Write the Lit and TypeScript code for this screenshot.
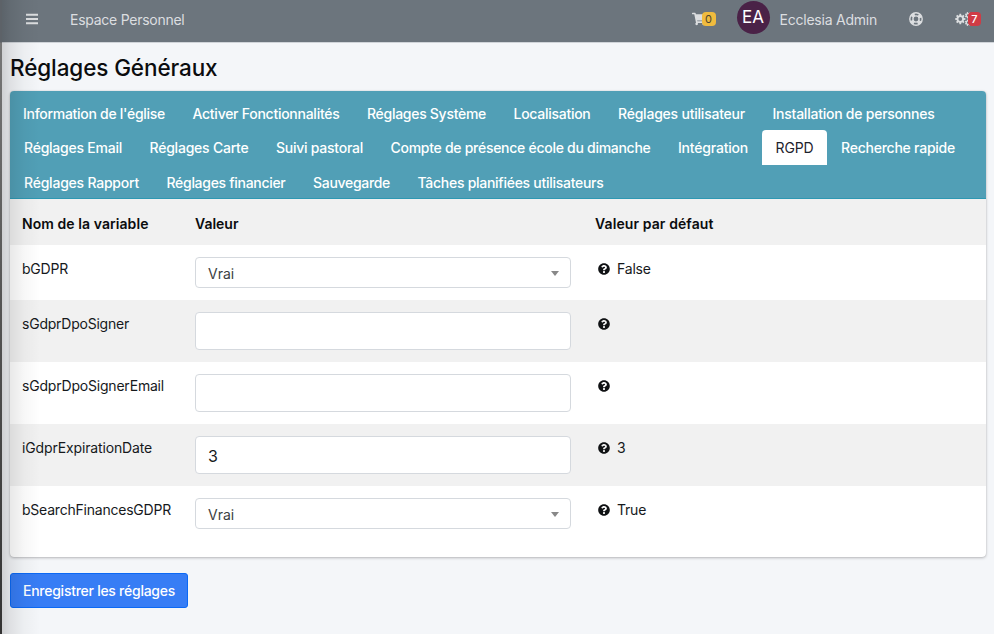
import { LitElement, html, css, svg } from "lit";
import { customElement } from "lit/decorators.js";

const gear = (cx: number, cy: number, r: number, hole: number, teeth: number) => {
  const pts: string[] = [];
  for (let i = 0; i < teeth; i++) {
    const a = (i / teeth) * Math.PI * 2;
    const s = (Math.PI * 2) / teeth;
    for (const [o, k] of [[-0.36, 0.74], [-0.2, 1], [0.2, 1], [0.36, 0.74]]) {
      pts.push(`${(cx + Math.cos(a + o * s) * r * k).toFixed(2)} ${(cy + Math.sin(a + o * s) * r * k).toFixed(2)}`);
    }
  }
  return `M${pts.join("L")}ZM${cx - hole} ${cy}a${hole} ${hole} 0 1 0 ${hole * 2} 0a${hole} ${hole} 0 1 0 ${-hole * 2} 0Z`;
};

const question = html`<svg class="help" viewBox="0 0 512 512">${svg`<path fill="currentColor" d="M504 256c0 136.997-111.043 248-248 248S8 392.997 8 256C8 119.083 119.043 8 256 8s248 111.083 248 248zM262.655 90c-54.497 0-89.255 22.957-116.549 63.758-3.536 5.286-2.353 12.415 2.715 16.258l34.699 26.31c5.205 3.947 12.621 3.008 16.665-2.122 17.864-22.658 30.113-35.797 57.303-35.797 20.429 0 45.698 13.148 45.698 32.958 0 14.976-12.363 22.667-32.534 33.976C247.128 238.528 216 254.941 216 296v4c0 6.627 5.373 12 12 12h56c6.627 0 12-5.373 12-12v-1.333c0-28.462 83.186-29.647 83.186-106.667 0-58.002-60.165-102-116.531-102zM256 338c-25.365 0-46 20.635-46 46 0 25.364 20.635 46 46 46s46-20.636 46-46c0-25.365-20.635-46-46-46z"/>`}</svg>`;

interface Tab { label: string; width: number; active?: boolean }
const tabRows: Tab[][] = [
  [
    { label: "Information de l'église", width: 142 },
    { label: "Activer Fonctionnalités", width: 147 },
    { label: "Réglages Système", width: 119 },
    { label: "Localisation", width: 77 },
    { label: "Réglages utilisateur", width: 127 },
    { label: "Installation de personnes", width: 162 },
  ],
  [
    { label: "Réglages Email", width: 98 },
    { label: "Réglages Carte", width: 99 },
    { label: "Suivi pastoral", width: 87 },
    { label: "Compte de présence école du dimanche", width: 260 },
    { label: "Intégration", width: 70 },
    { label: "RGPD", width: 38, active: true },
    { label: "Recherche rapide", width: 114 },
  ],
  [
    { label: "Réglages Rapport", width: 115 },
    { label: "Réglages financier", width: 119 },
    { label: "Sauvegarde", width: 77 },
    { label: "Tâches planifiées utilisateurs", width: 186 },
  ],
];

interface Row { name: string; nameWidth: number; kind: "select" | "text"; value: string; def: string }
const rows: Row[] = [
  { name: "bGDPR", nameWidth: 46, kind: "select", value: "Vrai", def: "False" },
  { name: "sGdprDpoSigner", nameWidth: 107, kind: "text", value: "", def: "" },
  { name: "sGdprDpoSignerEmail", nameWidth: 142, kind: "text", value: "", def: "" },
  { name: "iGdprExpirationDate", nameWidth: 130, kind: "text", value: "3", def: "3" },
  { name: "bSearchFinancesGDPR", nameWidth: 149, kind: "select", value: "Vrai", def: "True" },
];

@customElement("app-root")
export class AppRoot extends LitElement {
  static styles = css`
    :host { display: block; position: relative; height: 634px; overflow: hidden; background: #f4f6f9; color: #16191c;
      font: 14px/21px Inter, "Liberation Sans", sans-serif; }
    * { box-sizing: border-box; }
    svg { display: block; flex: none; }
    .bar { display: flex; align-items: center; height: 43px; padding: 0 12px 4px 26px; background: #6c757d;
      border-bottom: 1px solid #d0d4d9; color: #dcdee0; white-space: nowrap; }
    .brand { margin-left: 32px; flex: 1; }
    .badged { position: relative; height: 16px; }
    .badge { position: absolute; top: 1px; height: 14px; line-height: 14px; border-radius: 4px; font-size: 11px; text-align: center; }
    .yellow { left: 10px; width: 14px; background: #f0bb3e; color: #4c432c; }
    .red { left: 13px; width: 13px; background: #d03b45; color: #fff; font-weight: 500; }
    .avatar { width: 33px; height: 33px; margin: 0 10px 3px 31px; border-radius: 50%; background: #4a2247; color: #fff;
      font-size: 17px; line-height: 33px; text-align: center; }
    .ring { margin-left: 32px; }
    .gears { margin-left: 32px; width: 27px; }
    h1 { margin: 0; padding: 10px 10px 9px; font-size: 22.5px; line-height: 29px; font-weight: 500; color: #0b0c0e; }
    .card { margin: 0 8px 0 10px; height: 466px; background: #fff; border-radius: 4px; box-shadow: 0 0 1px rgba(0,0,0,.2), 0 1px 3px rgba(0,0,0,.25); overflow: hidden; }
    .tabs { height: 108px; padding-top: 4px; background: #519fb6; border-bottom: 1px solid #2d98b3; }
    .tabrow { display: flex; height: 35px; white-space: nowrap; }
    .tabrow:first-child { margin-left: -1px; }
    .tab { box-sizing: content-box; flex: none; height: 28px; padding: 7px 13px 0 14px; color: #fff; font-weight: 500; line-height: 21px; }
    .tabrow:first-child .tab { height: 27px; padding-top: 8px; }
    .active { background: #fff; color: #1e222d; font-weight: 400; border-radius: 4px 4px 0 0; }
    .grid { display: grid; grid-template-columns: 173px 400px 1fr; padding: 0 12px; }
    .grid:nth-child(odd) { background: #f1f1f1; }
    .head { height: 46px; line-height: 49px; font-weight: 600; color: #0b0c0e; }
    .row { height: 62px; padding-top: 12px; }
    .first { height: 55px; }
    .field { width: 376px; border: 1px solid #d5d9de; border-radius: 4px; background: #fff; padding: 0 12px; }
    .text { height: 38px; font-size: 16px; line-height: 38px; }
    .select { display: flex; align-items: center; justify-content: space-between; height: 31px; padding: 2px 11px 0 12px; color: #3c3f42; }
    .arrow { border: 4px solid transparent; border-top: 5px solid #888; border-bottom: 0; }
    .name { line-height: 23px; }
    .def { display: flex; height: 23px; align-items: center; gap: 7px; padding-left: 3px; letter-spacing: -.2px; }
    .help { width: 12px; height: 12px; color: #101214; }
    .save { display: block; margin: 16px 0 0 10px; width: 178px; height: 35px; padding: 0; border: 1px solid #0b69f5; border-radius: 3px;
      background: #377df5; color: #fff; font: 500 14px/34px Inter, sans-serif; white-space: nowrap; }
    .shade { position: absolute; inset: 0 auto 0 0; width: 40px; pointer-events: none;
      background: linear-gradient(90deg, rgba(0,0,0,.17), rgba(0,0,0,.09) 25%, rgba(0,0,0,.03) 60%, transparent); }
    .edge { position: absolute; inset: 0 auto 0 0; width: 2px; background: linear-gradient(#5d6268 42px, #777 43px, #555 300px, #333); }
  `;

  private fit() {
    this.renderRoot.querySelectorAll<HTMLElement>("[data-w]").forEach((el) => {
      const range = document.createRange();
      range.selectNodeContents(el);
      const natural = range.getBoundingClientRect().width;
      const n = (el.textContent ?? "").trim().length;
      el.style.letterSpacing = `${(Number(el.dataset.w) - natural) / n}px`;
    });
  }

  firstUpdated() {
    this.fit();
  }

  render() {
    return html`
      <header class="bar">
        <svg width="12" height="12" viewBox="0 0 12 12"><path fill="currentColor" d="M0 .8h12v2H0zM0 5h12v2H0zM0 9.2h12v2H0z"/></svg>
        <span class="brand"><span data-w="114.5">Espace Personnel</span></span>
        <span class="badged">
          <svg width="14" height="16" viewBox="0 -32 576 576"><path fill="currentColor" d="M528.12 301.319l47.273-208C578.806 78.301 567.391 64 551.99 64H159.208l-9.166-44.81C147.758 8.021 137.93 0 126.529 0H24C10.745 0 0 10.745 0 24v16c0 13.255 10.745 24 24 24h69.883l70.248 343.435C147.325 417.1 136 435.222 136 456c0 30.928 25.072 56 56 56s56-25.072 56-56c0-15.674-6.447-29.835-16.824-40h209.647C430.447 426.165 424 440.326 424 456c0 30.928 25.072 56 56 56s56-25.072 56-56c0-22.172-12.888-41.332-31.579-50.405l5.517-24.276c3.413-15.018-8.002-29.319-23.403-29.319H218.117l-6.545-32h293.145c11.206 0 20.92-7.754 23.403-18.681z"/></svg>
          <span class="badge yellow">0</span>
        </span>
        <span class="avatar">EA</span>
        <span data-w="97.5">Ecclesia Admin</span>
        <svg class="ring" width="14" height="14" viewBox="0 0 14 14" fill="none" stroke="currentColor">
          <circle cx="7" cy="7" r="6.2" stroke-width="1.4"/><circle cx="7" cy="7" r="3.1" stroke-width="1.4"/>
          <circle cx="7" cy="7" r="4.7" stroke-width="3" stroke-dasharray="3.6 3.783" stroke-dashoffset="-1.9"/>
        </svg>
        <span class="badged gears">
          <svg width="18" height="16" viewBox="0 0 18 16" fill="currentColor" fill-rule="evenodd">
            <path d=${gear(5.3, 8, 5.2, 1.9, 8)}/><path d=${gear(13, 4.3, 3.2, 1.1, 7)}/><path d=${gear(13, 11.7, 3.2, 1.1, 7)}/>
          </svg>
          <span class="badge red">7</span>
        </span>
      </header>
      <h1><span data-w="207.5">Réglages Généraux</span></h1>
      <main class="card">
        <nav class="tabs">
          ${tabRows.map((r) => html`<div class="tabrow">${r.map((t) => html`<div class="tab ${t.active ? "active" : ""}" style="width:${t.width + 0.5}px"><span data-w=${t.width}>${t.label}</span></div>`)}</div>`)}
        </nav>
        <section>
          <div class="grid head"><div><span data-w="126.5">Nom de la variable</span></div><div><span data-w="43.5">Valeur</span></div><div><span data-w="118.5">Valeur par défaut</span></div></div>
          ${rows.map((r, i) => html`<div class="grid row ${i === 0 ? "first" : ""}">
            <div class="name"><span data-w=${r.nameWidth}>${r.name}</span></div>
            <div>${r.kind === "select"
              ? html`<div class="field select"><span>${r.value}</span><i class="arrow"></i></div>`
              : html`<div class="field text">${r.value}</div>`}</div>
            <div class="def">${question}<span>${r.def}</span></div>
          </div>`)}
        </section>
      </main>
      <button class="save"><span data-w="152">Enregistrer les réglages</span></button>
      <div class="shade"></div><div class="edge"></div>
    `;
  }
}
